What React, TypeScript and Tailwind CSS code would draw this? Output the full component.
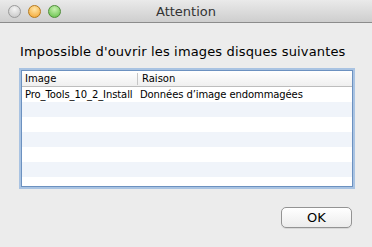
import React from 'react';

const rows = [
  { image: 'Pro_Tools_10_2_Install', reason: 'Données d’image endommagées' },
  { image: '', reason: '' },
  { image: '', reason: '' },
  { image: '', reason: '' },
  { image: '', reason: '' },
  { image: '', reason: '' },
  { image: '', reason: '' },
];

const App: React.FC = () => {
  return (
    <div className="w-[372px] h-[247px] bg-[#ececec] flex flex-col overflow-hidden" style={{ fontFamily: '"DejaVu Sans", sans-serif' }}>
      {/* Title bar */}
      <div className="h-[23px] grid grid-cols-[1fr_auto_1fr] items-center bg-gradient-to-b from-[#eaeaea] to-[#cecece] border-b border-[#8c8c8c]">
        <div className="flex items-center gap-[7px] pl-[8px]">
          <span className="w-[13px] h-[13px] rounded-full border border-[#9a9a9a] bg-[radial-gradient(circle_at_50%_30%,#f4f4f4,#c2c2c2)]" />
          <span className="w-[13px] h-[13px] rounded-full border border-[#b77a1c] bg-[radial-gradient(circle_at_50%_30%,#ffe6a8,#f2a22c)]" />
          <span className="w-[13px] h-[13px] rounded-full border border-[#4f8d3a] bg-[radial-gradient(circle_at_50%_30%,#c8f0b0,#5fbf45)]" />
        </div>
        <div className="text-[13px] text-[#333] leading-none">Attention</div>
        <div />
      </div>

      {/* Content */}
      <div className="flex flex-col px-[20px]">
        <p className="mt-[21px] text-[13px] leading-[16px] tracking-[0.15px] text-black">Impossible d'ouvrir les images disques suivantes</p>

        <div className="mt-[10px] ml-[1px] w-[332px] h-[117px] border border-[#6c91c0] shadow-[0_0_0_2px_#a9c3e2] bg-white overflow-hidden">
          <div className="h-[16px] flex items-center text-[10px] text-black bg-gradient-to-b from-white to-[#efefef] border-b border-[#bdbdbd]">
            <div className="w-[116px] pl-[3px] border-r border-[#c6c6c6] h-[12px] flex items-center">Image</div>
            <div className="pl-[4px]">Raison</div>
          </div>
          {rows.map((r, i) => (
            <div key={i} className={`h-[15px] flex items-center text-[10px] tracking-[-0.1px] text-black ${i % 2 === 0 ? 'bg-white' : 'bg-[#f0f4fa]'}`}>
              <div className="w-[116px] pl-[3px] whitespace-nowrap overflow-hidden">{r.image}</div>
              <div className="pl-[2px] whitespace-nowrap">{r.reason}</div>
            </div>
          ))}
        </div>

        <div className="mt-[20px] flex justify-end">
          <button className="w-[71px] h-[21px] rounded-[5px] border border-[#939393] bg-gradient-to-b from-white to-[#ececec] text-[13px] text-black leading-none shadow-[0_1px_0_#d8d8d8]">
            OK
          </button>
        </div>
      </div>
    </div>
  );
};

export default App;
